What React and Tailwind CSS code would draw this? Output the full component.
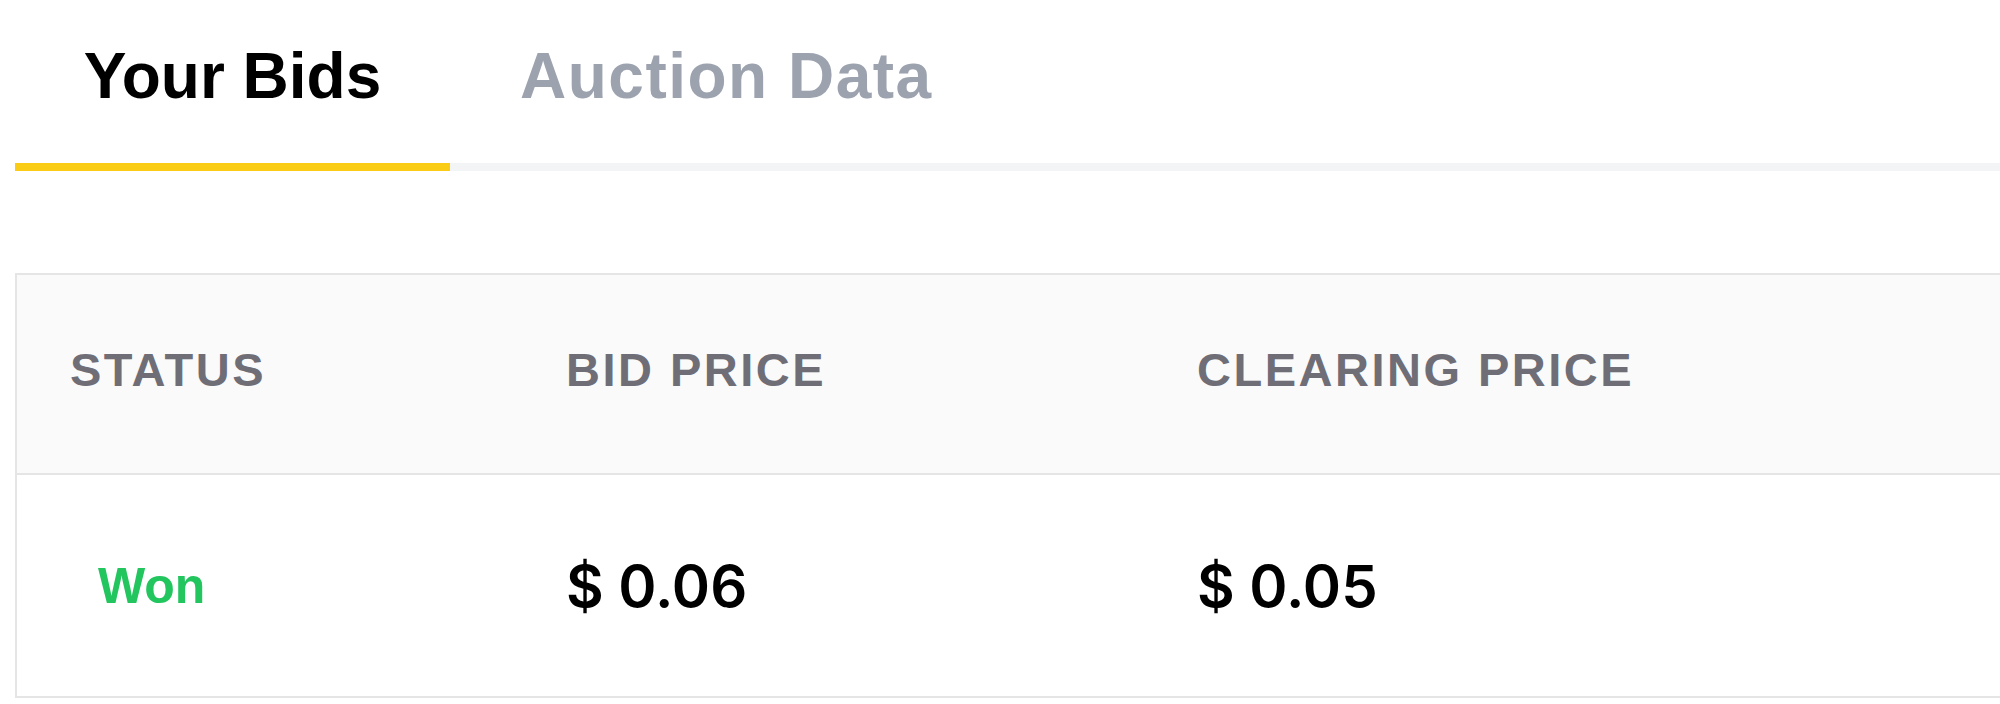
import React, { useState } from "react";

const rows = [{ status: "Won", bid: "0.06", clearing: "0.05" }];

export default function App() {
  const [tab, setTab] = useState("bids");

  return (
    <div className="min-h-screen bg-white pl-[15px] overflow-hidden font-['Liberation_Sans',Arial,sans-serif]">
      {/* Tabs */}
      <div className="flex">
        <button
          onClick={() => setTab("bids")}
          className={`w-[435px] text-center pt-[44px] pb-[55px] border-b-[8px] text-[64px] leading-[64px] font-bold ${
            tab === "bids"
              ? "border-[#facc15] text-black"
              : "border-[#f3f4f6] text-[#9ca3af]"
          }`}
        >
          Your Bids
        </button>
        <button
          onClick={() => setTab("auction")}
          className={`px-[70px] pt-[44px] pb-[55px] border-b-[8px] text-[64px] leading-[64px] font-bold tracking-[1.5px] ${
            tab === "auction"
              ? "border-[#facc15] text-black"
              : "border-[#f3f4f6] text-[#9ca3af]"
          }`}
        >
          Auction Data
        </button>
        <div className="flex-1 border-b-[8px] border-[#f3f4f6]"></div>
      </div>

      {/* Bids table */}
      <div className="mt-[102px] w-[2400px] border-2 border-[#e5e5e5]">
        <div className="grid grid-cols-[496px_631px_1fr] h-[200px] items-center pb-[10px] bg-[#fafafa] border-b-2 border-[#e5e5e5] text-[47px] leading-[47px] font-bold tracking-[2.5px] text-[#6f6e77]">
          <div className="pl-[53px]">STATUS</div>
          <div className="pl-[53px]">BID PRICE</div>
          <div className="pl-[53px]">CLEARING PRICE</div>
        </div>
        {rows.map((row, i) => (
          <div
            key={i}
            className="grid grid-cols-[496px_631px_1fr] h-[221px] items-center bg-white"
          >
            <div className="pl-[81px] text-[50px] leading-[50px] font-bold text-[#22c55e]">
              {row.status}
            </div>
            <div className="pl-[53px] font-['Inter',sans-serif] text-[58px] leading-[60px] font-semibold text-black">
              $ {row.bid}
            </div>
            <div className="pl-[53px] font-['Inter',sans-serif] text-[58px] leading-[60px] font-semibold text-black">
              $ {row.clearing}
            </div>
          </div>
        ))}
      </div>
    </div>
  );
}
